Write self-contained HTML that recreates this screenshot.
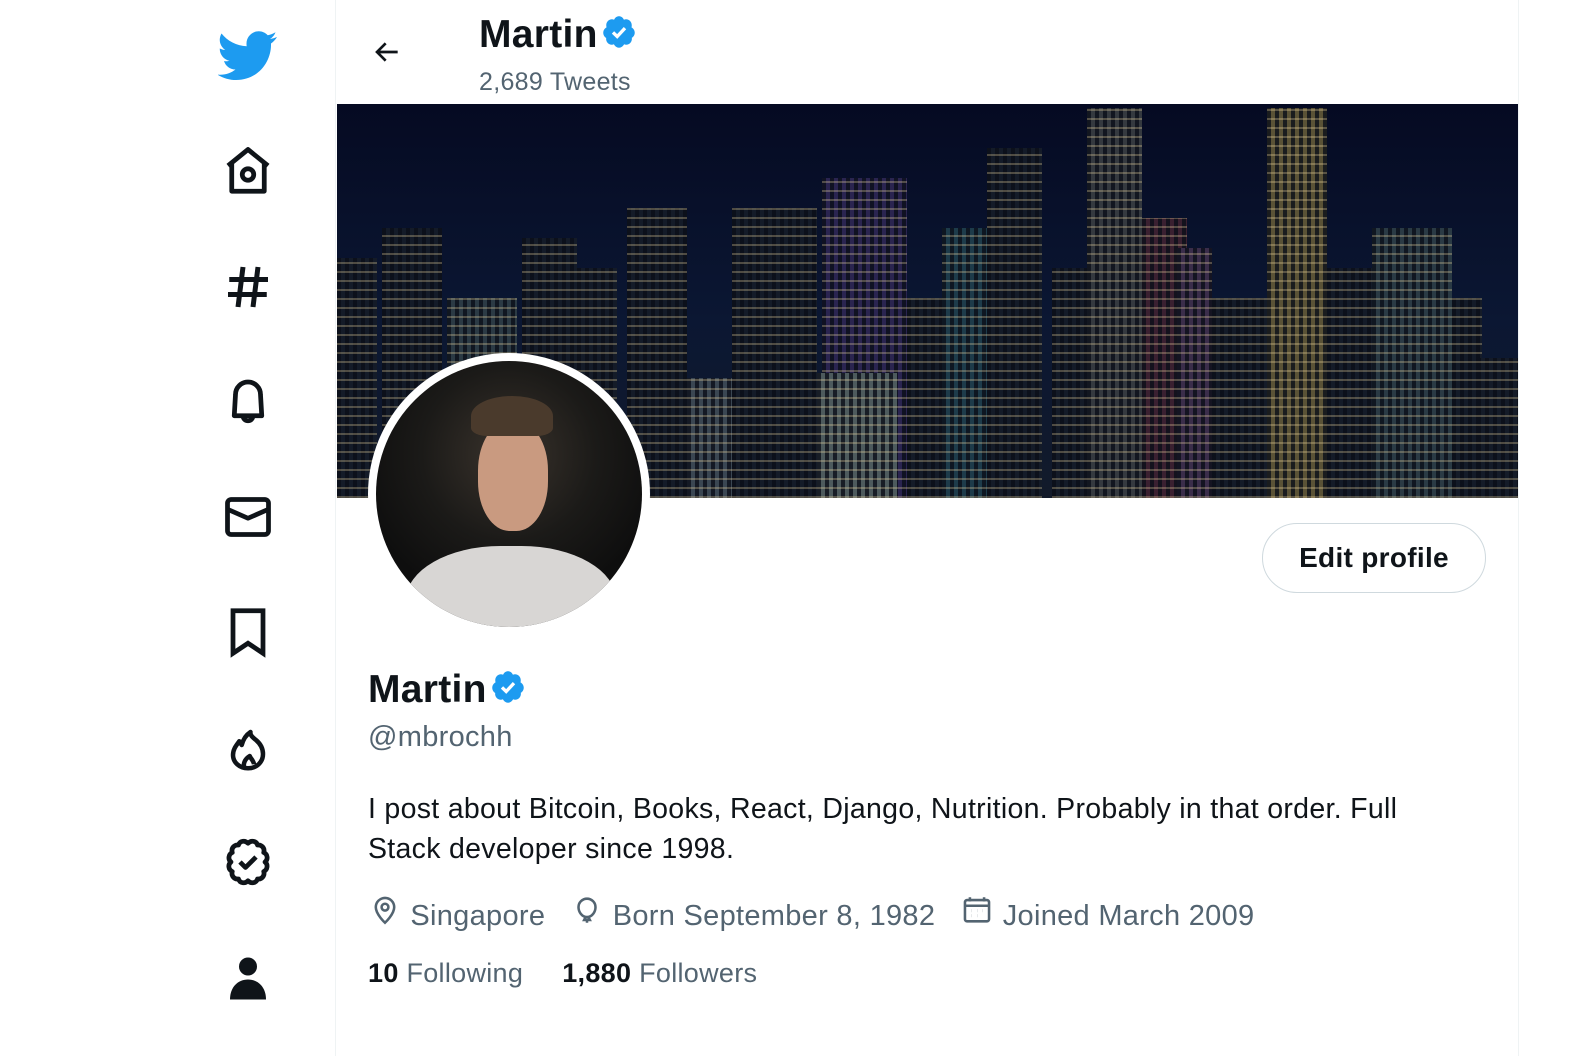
<!DOCTYPE html>
<html><head><meta charset="utf-8"><style>
*{margin:0;padding:0;box-sizing:border-box}
body{width:1588px;height:1056px;background:#fff;font-family:"Liberation Sans",sans-serif;color:#0f1419;position:relative;overflow:hidden;letter-spacing:.3px}
.side{position:absolute;left:0;top:0;width:336px;height:1056px;border-right:1px solid #eff3f4}
.ic{position:absolute;left:218px;width:60px;height:60px}
.main{position:absolute;left:336px;top:0;width:1183px;height:1056px;border-right:1px solid #eff3f4}
.banner{position:absolute;left:1px;top:104px;width:1181px;height:394px;background:linear-gradient(#050a22,#0b1733 55%,#121a2a);overflow:hidden}
.b{position:absolute;bottom:0;background-color:#141b28;background-image:repeating-linear-gradient(0deg,rgba(255,230,170,.28) 0 2px,transparent 2px 9px),repeating-linear-gradient(90deg,rgba(10,14,24,.8) 0 4px,transparent 4px 8px)}
.av{position:absolute;left:32px;top:353px;width:282px;height:282px;border-radius:50%;background:#fff;padding:8px}
.av>div{width:100%;height:100%;border-radius:50%;background:radial-gradient(circle at 50% 35%,#3a332c 0,#1b1a18 40%,#0e0e0e 70%);position:relative;overflow:hidden}
.t{position:absolute;white-space:nowrap}
.g{color:#536471}
</style></head><body>
<div class="side">
<svg class="ic" style="top:25px" viewBox="0 0 24 24"><path fill="#1d9bf0" d="M23.6 4.8c-.9.4-1.8.6-2.8.8 1-.6 1.8-1.6 2.2-2.7-1 .6-2 1-3.1 1.2C19 3.1 17.7 2.5 16.3 2.5c-2.7 0-4.9 2.2-4.9 4.9 0 .4 0 .8.1 1.1C7.4 8.3 3.8 6.4 1.4 3.4c-.4.7-.7 1.600-.7 2.5 0 1.7.9 3.2 2.2 4.1-.8 0-1.6-.3-2.2-.6v.1c0 2.4 1.7 4.4 3.900 4.8-.4.1-.8.2-1.3.2-.3 0-.6 0-.9-.1.6 2 2.4 3.4 4.6 3.4-1.7 1.3-3.8 2.1-6.1 2.1-.4 0-.8 0-1.2-.1 2.2 1.4 4.8 2.2 7.5 2.2 9.1 0 14-7.5 14-14v-.6c1-.7 1.8-1.6 2.4-2.600z"/></svg>
<svg class="ic" style="top:142px" viewBox="0 0 24 24" fill="none" stroke="#0f1419" stroke-width="1.9" stroke-linejoin="round"><path d="M4 9.5 12 3l8 6.5M5.5 8.5v11.2h13V8.5"/><circle cx="12" cy="13" r="2.3"/></svg>
<svg class="ic" style="top:257px" viewBox="0 0 24 24" fill="none" stroke="#0f1419" stroke-width="2"><path d="M10 4 8 20M16 4l-2 16M4.5 9h15.5M4 15h15.5"/></svg>
<svg class="ic" style="top:372px" viewBox="0 0 24 24" fill="none" stroke="#0f1419" stroke-width="1.9" stroke-linejoin="round"><path d="M6.5 17.5 7 9a5 5 0 0 1 10 0l.5 8.5zM10 17.5a2 2 0 0 0 4 0"/></svg>
<svg class="ic" style="top:487px" viewBox="0 0 24 24" fill="none" stroke="#0f1419" stroke-width="1.9" stroke-linejoin="round"><rect x="3.8" y="5" width="16.4" height="14" rx="1.5"/><path d="M4 9l8 3.5L20 9"/></svg>
<svg class="ic" style="top:602px" viewBox="0 0 24 24" fill="none" stroke="#0f1419" stroke-width="1.9"><path d="M6 3.5h12v17l-6-4-6 4z"/></svg>
<svg class="ic" style="top:717px" viewBox="0 0 24 24" fill="none" stroke="#0f1419" stroke-width="1.8" stroke-linejoin="round"><path d="M12 20.5c-3.5 0-6-2.4-6-5.3 0-2.5 1.5-4 2.5-5.5l1 1.5c.5-2 1.7-4 3.5-5.2-.3 1.2 1 2.3 2.3 3.3 1.5 1.3 2.7 3 2.7 5.5 0 3.2-2.5 5.7-6 5.7z"/><path d="M10.5 20.3c-.5-1.6.2-3.5 2.2-4.7.3 1 1.5 1.7 1.7 3.3"/></svg>
<svg class="ic" style="top:832px" viewBox="0 0 24 24" fill="none" stroke="#0f1419" stroke-width="1.9" stroke-linejoin="round"><path d="M12 4.5c1.2-1.3 3.3-1 3.8.7 1.7-.2 3 1.3 2.5 3 1.6.7 1.8 2.8.5 3.8 1.3 1 1 3.1-.5 3.8.5 1.7-.8 3.2-2.5 3-.5 1.7-2.6 2-3.8.7-1.2 1.3-3.3 1-3.8-.7-1.7.2-3-1.3-2.5-3-1.600-.7-1.8-2.8-.5-3.8-1.3-1-1-3.1.5-3.8-.5-1.7.8-3.2 2.5-3 .5-1.7 2.6-2 3.8-.7z"/><path d="M8.8 12l2.2 2.2 4.2-4.2"/></svg>
<svg class="ic" style="top:947px" viewBox="0 0 24 24" fill="#0f1419"><circle cx="12" cy="7.8" r="3.6"/><path d="M4.8 21c0-5 3.2-8 7.2-8s7.2 3 7.2 8z"/></svg>
</div>
<div class="main">
<svg style="position:absolute;left:34px;top:36px" width="34" height="32" viewBox="0 0 24 24" fill="none" stroke="#0f1419" stroke-width="2"><path d="M20 12H4.5M11 5.5 4.5 12l6.5 6.5"/></svg>
<div class="t" style="left:143px;top:13px;font-size:39px;font-weight:bold">Martin <svg width="36" height="36" viewBox="0 0 24 24" style="vertical-align:-3px;margin-left:-8px"><path fill="#1d9bf0" d="M22.5 12.5c0-1.6-.9-2.9-2.2-3.6.2-.4.2-.9.2-1.4 0-2.2-1.7-4-3.8-4-.5 0-1 .1-1.4.3C14.6 2.4 13.4 1.5 12 1.5s-2.6.9-3.3 2.3c-.5-.2-.9-.3-1.4-.3-2.1 0-3.8 1.8-3.8 4 0 .5.1 1 .2 1.4-1.3.7-2.2 2-2.2 3.6 0 1.5.8 2.8 2 3.5 0 .2-.1.4-.1.5 0 2.2 1.7 4 3.8 4 .5 0 1-.1 1.4-.3.7 1.4 2 2.3 3.4 2.3s2.7-.9 3.4-2.3c.4.2.9.3 1.4.3 2.1 0 3.8-1.8 3.8-4 0-.2 0-.4-.1-.6 1.2-.7 2-2 2-3.5z"/><path fill="none" stroke="#fff" stroke-width="2.2" d="M8 12.3l2.8 2.7 5.2-5.6"/></svg></div>
<div class="t g" style="left:143px;top:68px;font-size:25px">2,689 Tweets</div>
<div class="banner">
<div class="b" style="left:0;width:40px;height:240px"></div>
<div class="b" style="left:45px;width:60px;height:270px"></div>
<div class="b" style="left:110px;width:70px;height:200px;background-color:#2b3a44"></div>
<div class="b" style="left:185px;width:55px;height:260px"></div>
<div class="b" style="left:240px;width:40px;height:230px"></div>
<div class="b" style="left:290px;width:60px;height:290px"></div>
<div class="b" style="left:350px;width:50px;height:120px;background-color:#3a4652"></div>
<div class="b" style="left:395px;width:85px;height:290px"></div>
<div class="b" style="left:485px;width:85px;height:320px;background-color:#2a2450"></div>
<div class="b" style="left:480px;width:80px;height:125px;background-color:#4d5a5d"></div>
<div class="b" style="left:570px;width:40px;height:200px"></div>
<div class="b" style="left:605px;width:60px;height:270px;background-color:#1d3b4a"></div>
<div class="b" style="left:650px;width:55px;height:350px"></div>
<div class="b" style="left:715px;width:45px;height:230px"></div>
<div class="b" style="left:750px;width:55px;height:390px;background-color:#34393f"></div>
<div class="b" style="left:805px;width:45px;height:280px;background-color:#3a2030"></div>
<div class="b" style="left:840px;width:35px;height:250px;background-color:#3a2d4a"></div>
<div class="b" style="left:875px;width:60px;height:200px"></div>
<div class="b" style="left:930px;width:60px;height:390px;background-color:#5a5236"></div>
<div class="b" style="left:990px;width:45px;height:230px"></div>
<div class="b" style="left:1035px;width:80px;height:270px;background-color:#2a3a44"></div>
<div class="b" style="left:1115px;width:30px;height:200px"></div>
<div class="b" style="left:1140px;width:41px;height:140px"></div>
</div>
<div class="av"><div>
<div style="position:absolute;left:30px;top:185px;width:210px;height:120px;border-radius:45% 45% 0 0;background:#d8d6d4"></div>
<div style="position:absolute;left:102px;top:60px;width:70px;height:110px;border-radius:45%;background:#c99a80"></div>
<div style="position:absolute;left:95px;top:35px;width:82px;height:40px;border-radius:50% 50% 20% 20%;background:#4a3a2c"></div>
</div></div>
<div style="position:absolute;left:926px;top:523px;width:224px;height:70px;border:1px solid #cfd9de;border-radius:35px;font-size:28px;font-weight:bold;text-align:center;line-height:68px">Edit profile</div>
<div class="t" style="left:32px;top:668px;font-size:39px;font-weight:bold">Martin <svg width="36" height="36" viewBox="0 0 24 24" style="vertical-align:-3px;margin-left:-8px"><path fill="#1d9bf0" d="M22.5 12.5c0-1.6-.9-2.9-2.2-3.6.2-.4.2-.9.2-1.4 0-2.2-1.7-4-3.8-4-.5 0-1 .1-1.4.3C14.6 2.4 13.4 1.5 12 1.5s-2.6.9-3.3 2.3c-.5-.2-.9-.3-1.4-.3-2.1 0-3.8 1.8-3.8 4 0 .5.1 1 .2 1.4-1.3.7-2.2 2-2.2 3.6 0 1.5.8 2.8 2 3.5 0 .2-.1.4-.1.5 0 2.2 1.7 4 3.8 4 .5 0 1-.1 1.4-.3.7 1.4 2 2.3 3.4 2.3s2.7-.9 3.4-2.3c.4.2.9.3 1.4.3 2.1 0 3.8-1.8 3.8-4 0-.2 0-.4-.1-.6 1.2-.7 2-2 2-3.5z"/><path fill="none" stroke="#fff" stroke-width="2.2" d="M8 12.3l2.8 2.7 5.2-5.6"/></svg></div>
<div class="t g" style="left:32px;top:721px;font-size:29px">@mbrochh</div>
<div style="position:absolute;left:32px;top:789px;width:1090px;font-size:28.5px;line-height:40px">I post about Bitcoin, Books, React, Django, Nutrition. Probably in that order. Full Stack developer since 1998.</div>
<div class="t g" style="left:32px;top:893px;font-size:29px">
<svg width="34" height="34" viewBox="0 0 24 24" fill="none" stroke="#536471" stroke-width="1.8" style="vertical-align:-2px"><path d="M12 21s-6.5-6-6.5-11a6.5 6.5 0 0 1 13 0c0 5-6.5 11-6.5 11z"/><circle cx="12" cy="10" r="2.4"/></svg> Singapore&nbsp;&nbsp;
<svg width="34" height="34" viewBox="0 0 24 24" fill="none" stroke="#536471" stroke-width="1.8" style="vertical-align:-2px"><path d="M12 17c-3.5 0-6-3.5-6-7a6 6 0 0 1 12 0c0 3.5-2.5 7-6 7zM11 17l-1 2h4l-1-2M12 19v2"/></svg> Born September 8, 1982&nbsp;&nbsp;
<svg width="34" height="34" viewBox="0 0 24 24" fill="none" stroke="#536471" stroke-width="1.8" style="vertical-align:-2px"><rect x="3.5" y="5" width="17" height="15" rx="1.5"/><path d="M3.5 9h17M7 3v3M17 3v3"/><path stroke-width="2.2" d="M8 12.5h.1M12 12.5h.1M16 12.5h.1M8 16h.1M12 16h.1"/></svg> Joined March 2009</div>
<div class="t g" style="left:32px;top:958px;font-size:27px"><b style="color:#0f1419">10</b> Following&nbsp;&nbsp;&nbsp;&nbsp;&nbsp;<b style="color:#0f1419">1,880</b> Followers</div>
</div>
</body></html>
